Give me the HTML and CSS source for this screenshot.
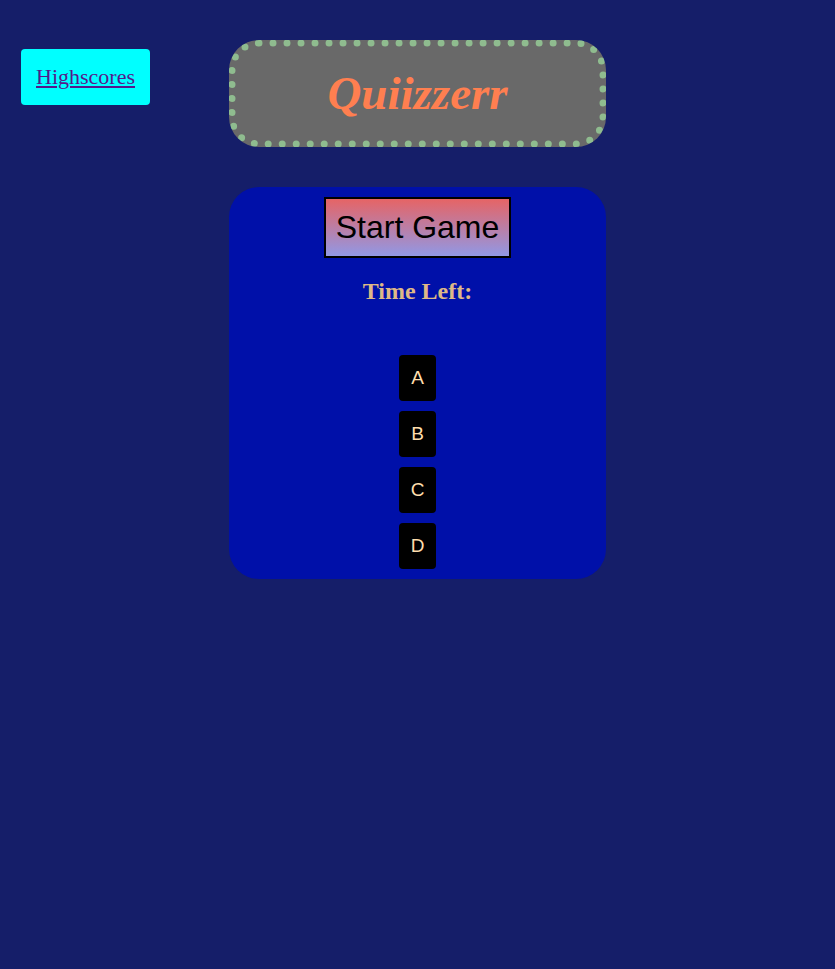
FILE: index.html
```html
<!DOCTYPE html>
<html lang="en">
<head>
<meta charset="utf-8">
<meta name="viewport" content="width=device-width, initial-scale=1">
<title>Quiizzerr</title>
<link rel="stylesheet" href="styles.css">
</head>
<body>
<a class="highscores" href="#highscores">Highscores</a>
<main class="column">
<header class="banner"><h1 class="title">Quiizzerr</h1></header>
<section class="quiz">
<button class="start" type="button">Start Game</button>
<h2 class="time">Time Left:</h2>
<div class="answers">
<button class="answer" type="button">A</button>
<button class="answer" type="button">B</button>
<button class="answer" type="button">C</button>
<button class="answer" type="button">D</button>
</div>
</section>
</main>
</body>
</html>
```

FILE: styles.css
```css
* {
  box-sizing: border-box;
}

body {
  display: grid;
  grid-template-columns: 1fr minmax(0, 46%) 1fr;
  column-gap: 8px;
  align-items: start;
  margin: 0;
  padding: 40px 8px;
  background: #151e69;
  font-family: "Liberation Serif", "Times New Roman", serif;
}

.highscores {
  justify-self: start;
  margin: 9px 0 0 13px;
  padding: 15px;
  border-radius: 4px;
  background: #00ffff;
  color: #551a8b;
  font-size: 22px;
  line-height: 26px;
}

.column {
  display: grid;
  gap: 40px;
}

.banner {
  padding: 15px;
  border: 7px dotted #8fbc8f;
  border-radius: 30px;
  background: #696969;
}

.title {
  margin: 0;
  color: #ff7f50;
  font-family: "Brush Script MT", "Liberation Serif", cursive;
  font-size: 47px;
  font-style: italic;
  font-weight: bold;
  line-height: 63px;
  text-align: center;
}

.quiz {
  display: flex;
  flex-direction: column;
  align-items: center;
  padding: 10px;
  border-radius: 30px;
  background: #0010a9;
}

.start {
  padding: 10px;
  border: 2px solid #000;
  background: linear-gradient(#e66465, #9198e5);
  color: #000;
  font-family: "Liberation Sans", Arial, sans-serif;
  font-size: 32px;
  line-height: 37px;
}

.time {
  margin: 20px 0 50px;
  color: #deb887;
  font-size: 24px;
  line-height: 27px;
}

.answers {
  display: grid;
  gap: 10px;
}

.answer {
  padding: 12px;
  border: 0;
  border-radius: 4px;
  background: #000;
  color: #ffdead;
  font-family: "Liberation Sans", Arial, sans-serif;
  font-size: 19px;
  line-height: 22px;
}
```
